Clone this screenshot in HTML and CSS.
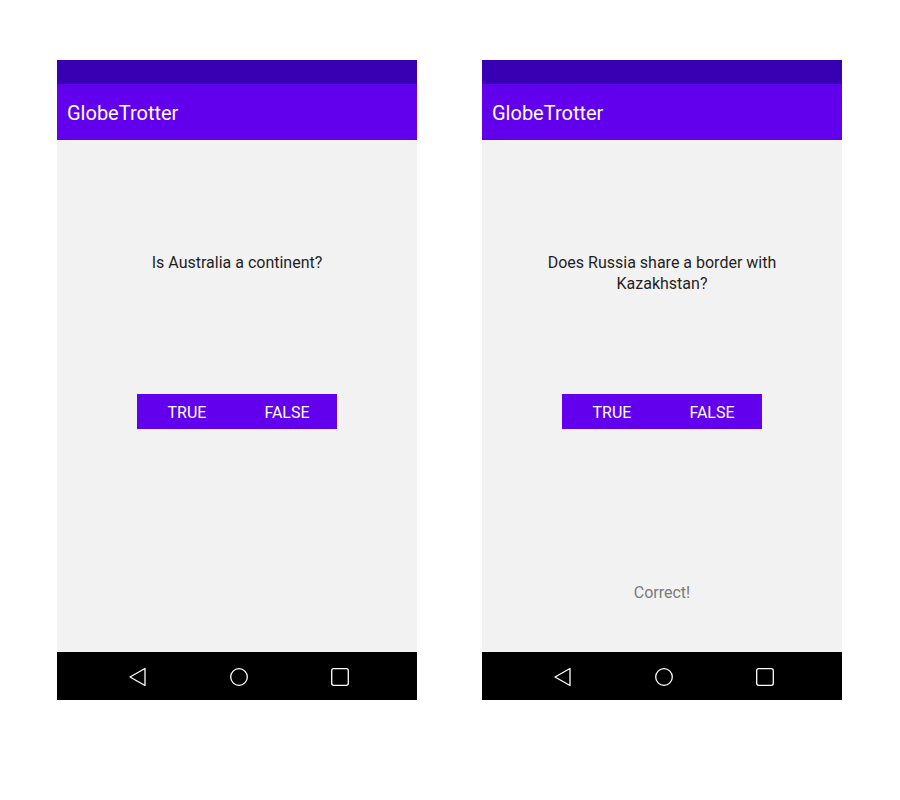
FILE: index.html
```html
<!DOCTYPE html>
<html>
<head>
<meta charset="utf-8">
<link rel="stylesheet" href="styles.css">
</head>
<body>
<div class="stage">
  <div class="phone">
    <div class="status-bar"></div>
    <div class="app-bar"><span class="app-title">GlobeTrotter</span></div>
    <div class="content">
      <div class="question">Is Australia a continent?</div>
      <div class="buttons">
        <button class="btn">TRUE</button>
        <button class="btn">FALSE</button>
      </div>
      <div class="feedback"></div>
    </div>
    <div class="nav-bar">
      <svg class="nav-icon" width="20" height="20" viewBox="0 0 20 20"><path d="M17 1.5 L17 18.5 L2 10 Z" fill="none" stroke="#fff" stroke-width="1.3" stroke-linejoin="round"/></svg>
      <svg class="nav-icon" width="20" height="20" viewBox="0 0 20 20"><circle cx="10" cy="10" r="8.3" fill="none" stroke="#fff" stroke-width="1.3"/></svg>
      <svg class="nav-icon" width="20" height="20" viewBox="0 0 20 20"><rect x="1.7" y="1.7" width="16.6" height="16.6" rx="2" fill="none" stroke="#fff" stroke-width="1.3"/></svg>
    </div>
  </div>
  <div class="phone">
    <div class="status-bar"></div>
    <div class="app-bar"><span class="app-title">GlobeTrotter</span></div>
    <div class="content">
      <div class="question">Does Russia share a border with Kazakhstan?</div>
      <div class="buttons">
        <button class="btn">TRUE</button>
        <button class="btn">FALSE</button>
      </div>
      <div class="feedback">Correct!</div>
    </div>
    <div class="nav-bar">
      <svg class="nav-icon" width="20" height="20" viewBox="0 0 20 20"><path d="M17 1.5 L17 18.5 L2 10 Z" fill="none" stroke="#fff" stroke-width="1.3" stroke-linejoin="round"/></svg>
      <svg class="nav-icon" width="20" height="20" viewBox="0 0 20 20"><circle cx="10" cy="10" r="8.3" fill="none" stroke="#fff" stroke-width="1.3"/></svg>
      <svg class="nav-icon" width="20" height="20" viewBox="0 0 20 20"><rect x="1.7" y="1.7" width="16.6" height="16.6" rx="2" fill="none" stroke="#fff" stroke-width="1.3"/></svg>
    </div>
  </div>
</div>
</body>
</html>
```
FILE: styles.css
```css
html, body {
  margin: 0;
  padding: 0;
  background: #ffffff;
  font-family: Roboto, "Noto Sans", Arial, sans-serif;
}
.stage {
  display: flex;
  gap: 65px;
  padding: 60px 0 0 57px;
}
.phone {
  width: 360px;
  height: 640px;
  display: flex;
  flex-direction: column;
  background: #f2f2f2;
}
.status-bar {
  height: 24px;
  background: #3700b3;
}
.app-bar {
  height: 56px;
  box-sizing: border-box;
  background: #6200ee;
  display: flex;
  align-items: center;
  padding: 2px 0 0 10px;
}
.app-title {
  color: #ffffff;
  font-size: 20px;
}
.content {
  flex: 1;
  display: flex;
  flex-direction: column;
  align-items: center;
  padding-top: 112px;
}
.question {
  height: 142px;
  width: 260px;
  text-align: center;
  font-size: 16px;
  line-height: 21px;
  color: #1f1f1f;
}
.buttons {
  display: flex;
  width: 200px;
  height: 35px;
  background: #6200ee;
}
.btn {
  flex: 1;
  border: none;
  background: transparent;
  color: #ffffff;
  font-family: Roboto, "Noto Sans", Arial, sans-serif;
  font-size: 16px;
  padding: 2px 0 0 0;
}
.feedback {
  margin-top: 153px;
  height: 21px;
  line-height: 21px;
  font-size: 16px;
  color: #7a7a7a;
}
.nav-bar {
  height: 48px;
  box-sizing: border-box;
  background: #000000;
  display: flex;
  align-items: center;
  padding: 2px 0 0 71px;
  gap: 81px;
}
.nav-icon {
  display: block;
}
```
